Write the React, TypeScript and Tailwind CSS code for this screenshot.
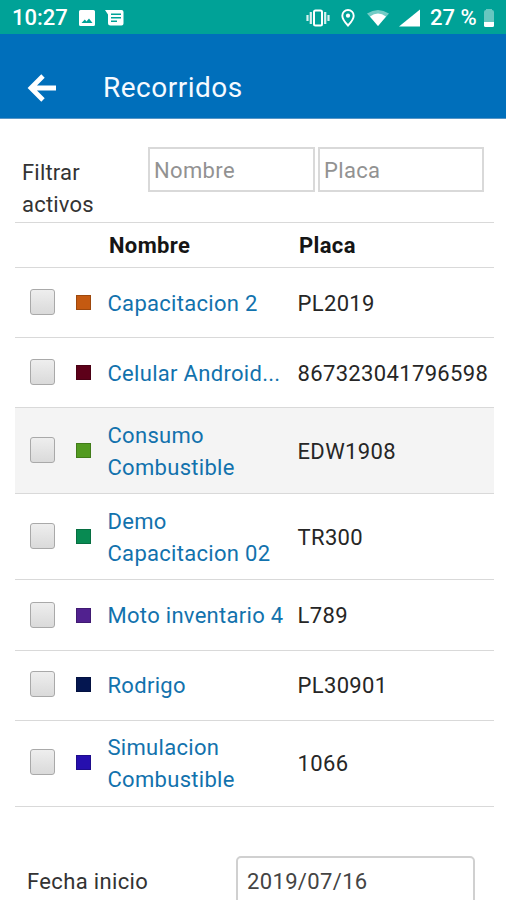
type Asset = {
  name: string[];
  plate: string;
  color: string;
  height: string;
  selected?: boolean;
};

const assets: Asset[] = [
  { name: ["Capacitacion 2"], plate: "PL2019", color: "bg-[#c55a11]", height: "h-[70px]" },
  { name: ["Celular Android..."], plate: "867323041796598", color: "bg-[#5d0019]", height: "h-[70px]" },
  { name: ["Consumo", "Combustible"], plate: "EDW1908", color: "bg-[#529a20]", height: "h-[86px]", selected: true },
  { name: ["Demo", "Capacitacion 02"], plate: "TR300", color: "bg-[#088a52]", height: "h-[86px]" },
  { name: ["Moto inventario 4"], plate: "L789", color: "bg-[#51218f]", height: "h-[71px]" },
  { name: ["Rodrigo"], plate: "PL30901", color: "bg-[#041650]", height: "h-[70px] pb-[2px]" },
  { name: ["Simulacion", "Combustible"], plate: "1066", color: "bg-[#260fae]", height: "h-[86px] pb-[2px]" },
];

function StatusBar() {
  return (
    <div className="flex h-[34px] items-center bg-[#00a297] pt-[2px] text-white">
      <span className="ml-[12px] w-[56px] text-[22px] leading-[32px] font-medium">10:27</span>
      <svg className="ml-[11px]" width="16" height="16" viewBox="0 0 16 16">
        <path fill="white" fillRule="evenodd" d="M1.5 0h13A1.5 1.5 0 0 1 16 1.5v13a1.5 1.5 0 0 1-1.5 1.5h-13A1.5 1.5 0 0 1 0 14.500v-13A1.500 1.500 0 0 1 1.500 0zM2.500 13h11l-3.500-4.500-2.500 3-1.700-2z" />
      </svg>
      <svg className="ml-[10px]" width="19" height="16" viewBox="0 0 19 16">
        <path fill="white" fillRule="evenodd" d="M0 0h16.500Q18.500 0 18.500 2v11.500Q18.500 15.500 16.500 15.500h-11Q3 15.500 3 13V4.500zM6 3.500V5h10V3.500zM6 7v1.500h10V7zM6 10.500V12h6v-1.500z" />
      </svg>
      <svg className="ml-[182px]" width="24" height="18" viewBox="0 0 24 18">
        <rect x="8" y="1.500" width="8" height="15" rx="1.500" fill="none" stroke="white" strokeWidth="2" />
        <path d="M4.800 3v12M19.200 3v12M1.500 6v6M22.500 6v6" stroke="white" strokeWidth="2.200" strokeOpacity=".85" />
      </svg>
      <svg className="ml-[11px]" width="14" height="18" viewBox="0 0 14 18">
        <path d="M7 1a5.700 5.700 0 0 0-5.700 5.700C1.300 10.500 7 16.500 7 16.500s5.700-6 5.700-9.800A5.700 5.700 0 0 0 7 1z" fill="none" stroke="white" strokeWidth="1.900" />
        <circle cx="7" cy="6.700" r="2.100" fill="white" />
      </svg>
      <svg className="ml-[12px]" width="22" height="18" viewBox="0 0 22 18">
        <path d="M0 4.500Q11-2.500 22 4.500L11 17z" fill="white" fillOpacity=".45" />
        <path d="M3 7.500Q11 1.500 19 7.500L11 17z" fill="white" />
      </svg>
      <svg className="ml-[10px]" width="21" height="18" viewBox="0 0 22 18">
        <path d="M22 0v18H0z" fill="white" />
      </svg>
      <span className="ml-[10px] w-[47px] text-[22px] leading-[32px] font-medium whitespace-nowrap">27 %</span>
      <svg className="ml-[7px]" width="10" height="18" viewBox="0 0 10 18">
        <path d="M0 3Q0 1 2 1V0h6v1q2 0 2 2v11H0z" fill="white" fillOpacity=".4" />
        <path d="M0 13h10v3.500q0 1.500-1.500 1.500h-7Q0 18 0 16.500z" fill="white" />
      </svg>
    </div>
  );
}

function Header() {
  return (
    <header className="flex h-[85px] items-center border-b border-[#5795c5] bg-[#006fbb] pt-[24px]">
      <svg className="ml-[27px]" width="30" height="28" viewBox="0 0 30 28">
        <path d="M29 14H4M16 2L4 14l12 12" fill="none" stroke="white" strokeWidth="4.800" />
      </svg>
      <h1 className="ml-[46px] text-[28px] leading-[32px] tracking-[0.500px] text-[#f5faff]">Recorridos</h1>
    </header>
  );
}

function AssetRow({ asset }: { asset: Asset }) {
  return (
    <div className={`flex items-center border-b border-[#d9d9d9] ${asset.height} ${asset.selected ? "bg-[#f4f4f4]" : ""}`}>
      <span className="mb-[1px] ml-[15px] h-[26px] w-[25px] rounded-[3px] border border-[#a9a9a9] bg-linear-to-b from-[#eeeeee] to-[#dadada]" />
      <span className={`ml-[21px] size-[15px] border border-black/20 ${asset.color}`} />
      <div className="mt-[2px] ml-[16.500px] w-[190px] leading-[32px] tracking-[0.300px] whitespace-nowrap text-[#1272ad]">
        {asset.name.map((line) => (
          <div key={line}>{line}</div>
        ))}
      </div>
      <span className="mt-[2px] leading-[32px] text-[#262626]">{asset.plate}</span>
    </div>
  );
}

export default function App() {
  return (
    <div className="h-[900px] w-[506px] overflow-hidden bg-white font-['Roboto',sans-serif] text-[22px] text-[#333]">
      <StatusBar />
      <Header />
      <main className="tracking-[0.350px]">
        <div className="flex h-[103px] pt-[28px]">
          <div className="ml-[22px] w-[126px] pt-[10px] leading-[32px] tracking-[0.200px]">Filtrar<br />activos</div>
          <input className="h-[45px] w-[167px] border-2 border-[#d9d9d9] px-[4px] pt-[2px] placeholder:text-[#929292]" placeholder="Nombre" />
          <input className="ml-[3px] h-[45px] w-[166px] border-2 border-[#d9d9d9] px-[4px] pt-[2px] placeholder:text-[#929292]" placeholder="Placa" />
        </div>
        <div className="mr-[12px] ml-[15px] border-t border-[#d9d9d9]">
          <div className="flex h-[45px] items-center border-b border-[#d9d9d9] font-bold text-[#151515]">
            <span className="ml-[94px] w-[190px]">Nombre</span>
            <span>Placa</span>
          </div>
          {assets.map((asset) => (
            <AssetRow key={asset.plate} asset={asset} />
          ))}
        </div>
        <div className="flex pt-[49px]">
          <label className="ml-[27px] w-[209px] pt-[10px] leading-[32px]">Fecha inicio</label>
          <input className="h-[50px] w-[239px] rounded-[5px] border-2 border-[#d0d0d0] px-[9px] text-[#444]" defaultValue="2019/07/16" />
        </div>
      </main>
    </div>
  );
}
